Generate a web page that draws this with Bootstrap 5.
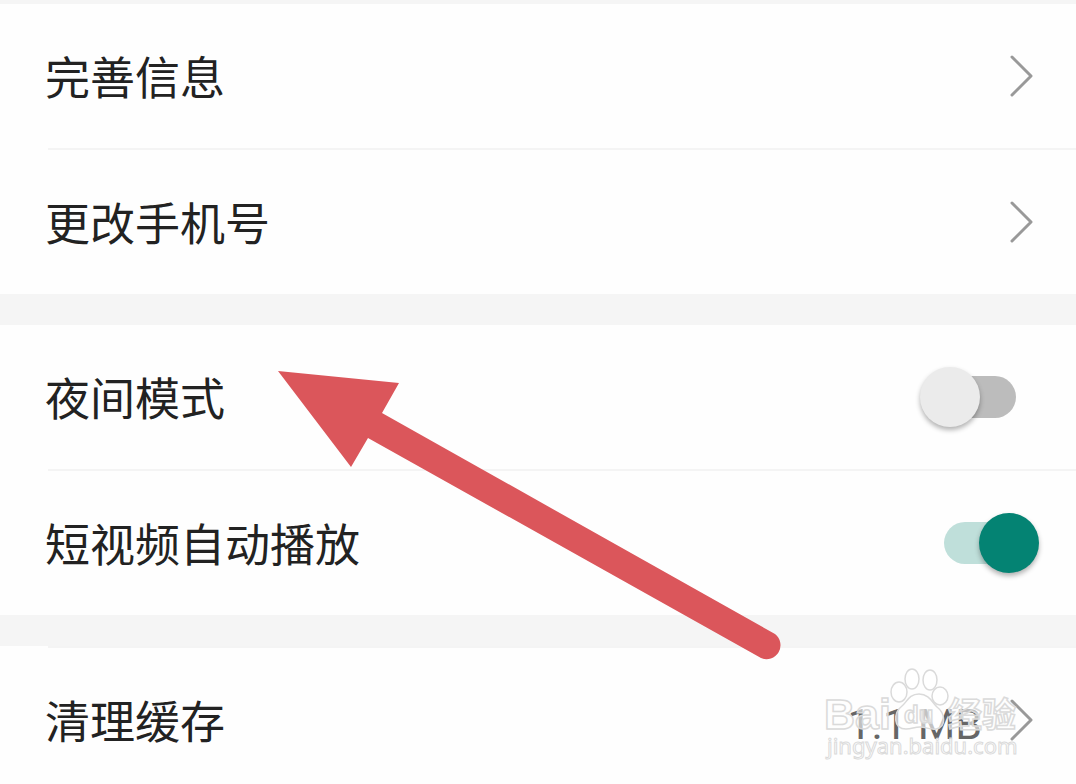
<!DOCTYPE html>
<html lang="zh-CN">
<head>
<meta charset="utf-8">
<meta name="viewport" content="width=device-width, initial-scale=1">
<title>设置</title>
<link href="https://cdn.jsdelivr.net/npm/bootstrap@5.3.0/dist/css/bootstrap.min.css" rel="stylesheet">
<style>
  body { font-family: Roboto, "Noto Sans CJK SC", sans-serif; color: #222; background: #f5f5f5; }
  .settings { padding-top: 4px; }
  .group { background: #fefefe; margin-bottom: 31px; }
  .item { min-height: 144px; padding: 0 43px 0 45px; font-size: 45px; line-height: 64px; color: #222; }
  .item:hover { color: #222; }
  .item label, .item span { padding-top: 7px; }
  .rule { height: 2px; margin-left: 48px; background: #f4f4f4; }
  .chevron { width: 24px; height: 44px; fill: none; stroke: #999; stroke-width: 3; stroke-linecap: round; stroke-linejoin: round; }
  .size-value { font-size: 43px; color: #666; margin-right: 27px; }
  .toggle { appearance: none; position: relative; width: 96px; height: 60px; margin: 0 17px 0 0; cursor: pointer; }
  .toggle::before { content: ""; position: absolute; top: 9px; right: 0; width: 86px; height: 42px; border-radius: 21px; background: #bcbcbc; }
  .toggle::after { content: ""; position: absolute; top: 0; left: 0; width: 60px; height: 60px; border-radius: 50%; background: #ebebeb; box-shadow: 0 3px 5px rgba(0,0,0,.3); }
  .toggle:checked { margin-right: -6px; }
  .toggle:checked::before { left: 1px; right: auto; background: #bfdfda; }
  .toggle:checked::after { left: auto; right: 0; background: #048373; }
  .pointer { left: 278px; top: 370px; width: 504px; height: 292px; fill: #db565b; }
  .watermark { right: 54px; top: 664px; width: 200px; height: 104px; }
  .watermark text, .watermark path, .watermark ellipse { fill: #fff; fill-opacity: .6; stroke: #dadada; stroke-width: 1.5; }
  .watermark .wm-url { stroke-width: 1; }
  .wm-brand { font: bold 43px "Liberation Sans", sans-serif; }
  .wm-du { font: bold 24px "Liberation Sans", sans-serif; }
  .wm-cn { font: bold 34px "Noto Sans CJK SC", sans-serif; }
  .wm-url { font: 22px "Noto Sans", sans-serif; }
</style>
</head>
<body>
<main class="settings position-relative vh-100 overflow-hidden">
  <section class="group">
    <a href="#profile" class="item d-flex align-items-center justify-content-between text-decoration-none">
      <span>完善信息</span>
      <svg class="chevron" viewBox="0 0 24 44" aria-hidden="true"><path d="M3 3 22 22 3 41"/></svg>
    </a>
    <div class="rule"></div>
    <a href="#phone" class="item d-flex align-items-center justify-content-between text-decoration-none">
      <span>更改手机号</span>
      <svg class="chevron" viewBox="0 0 24 44" aria-hidden="true"><path d="M3 3 22 22 3 41"/></svg>
    </a>
  </section>
  <section class="group">
    <div class="item d-flex align-items-center justify-content-between">
      <label for="night">夜间模式</label>
      <input class="toggle" type="checkbox" role="switch" id="night">
    </div>
    <div class="rule"></div>
    <div class="item d-flex align-items-center justify-content-between">
      <label for="autoplay">短视频自动播放</label>
      <input class="toggle" type="checkbox" role="switch" id="autoplay" checked>
    </div>
  </section>
  <section class="group">
    <div class="rule"></div>
    <a href="#cache" class="item d-flex align-items-center text-decoration-none">
      <span class="me-auto">清理缓存</span>
      <span class="size-value">1.1 MB</span>
      <svg class="chevron" viewBox="0 0 24 44" aria-hidden="true"><path d="M3 3 22 22 3 41"/></svg>
    </a>
  </section>

  <svg class="pointer position-absolute pe-none" viewBox="278 370 504 292" aria-hidden="true">
    <path d="M278 371 399 383 382 413 775 634A14 14 0 0 1 761 658L368 438 351 467Z"/>
  </svg>

  <svg class="watermark position-absolute pe-none" viewBox="822 664 200 104" role="img" aria-label="Baidu 经验">
    <text class="wm-brand" x="824" y="729">Bai</text>
    <ellipse cx="899" cy="692" rx="8" ry="10"/>
    <ellipse cx="912" cy="679" rx="7" ry="10"/>
    <ellipse cx="930" cy="680" rx="7" ry="10"/>
    <ellipse cx="940" cy="696" rx="8" ry="9"/>
    <path d="M919 694C909 694 907 702 902 706 893 713 893 729 906 729 912 729 914 727 920 727 926 727 930 730 936 729 947 727 945 713 937 707 932 702 929 694 919 694Z"/>
    <text class="wm-du" x="904" y="723">du</text>
    <text class="wm-cn" x="948" y="727">经验</text>
    <text class="wm-url" x="827" y="754">jingyan.baidu.com</text>
  </svg>
</main>
<script src="https://cdn.jsdelivr.net/npm/bootstrap@5.3.0/dist/js/bootstrap.bundle.min.js"></script>
</body>
</html>
